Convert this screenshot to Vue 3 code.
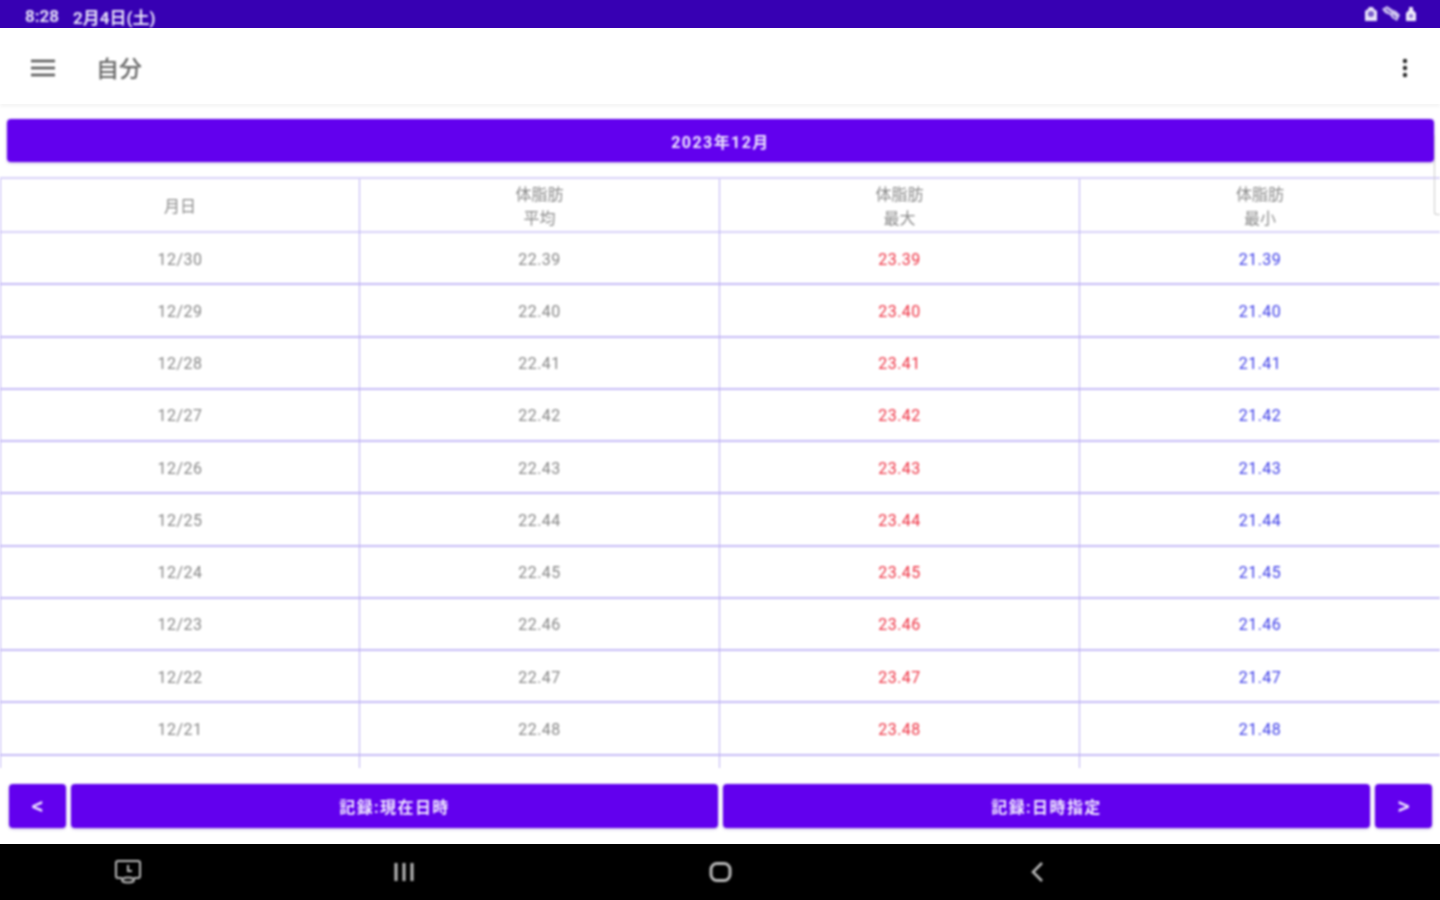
<template>
  <div class="screen">
    <div class="status-bar">
      <span class="status-time">8:28</span>
      <span class="status-date">2月4日(土)</span>
      <div class="status-icons">
        <svg width="14" height="16" viewBox="0 0 14 16"><path d="M5 1h4l1 2 3 2v10H1V5l3-2z" fill="#e9e4fa" /><circle cx="7" cy="8" r="3" fill="#7a5ccc" /></svg>
        <svg width="18" height="16" viewBox="0 0 18 16"><path d="M0 3l5-3 6 4 3 1 4 4-3 6-5-3-2-3-5-2z" fill="#cfc4f0" /><path d="M4 3l5 4M11 9l3 3" stroke="#5a35b8" stroke-width="1.2" /></svg>
        <svg width="14" height="16" viewBox="0 0 14 16"><path d="M5 1h4v3l3 3v8H2V7l3-3z" fill="#efeafb" /><circle cx="7" cy="10" r="2" fill="#8d74d4" /></svg>
      </div>
    </div>

    <header class="app-bar">
      <svg class="menu-icon" width="24" height="18" viewBox="0 0 24 18">
        <path d="M0 2h24M0 9h24M0 16h24" stroke="#555" stroke-width="2.4" fill="none" />
      </svg>
      <h1 class="app-title">自分</h1>
      <svg class="more-icon" width="6" height="20" viewBox="0 0 6 20">
        <circle cx="3" cy="3" r="2.2" fill="#222" />
        <circle cx="3" cy="10" r="2.2" fill="#222" />
        <circle cx="3" cy="17" r="2.2" fill="#222" />
      </svg>
    </header>

    <main class="content">
      <button class="btn month-btn">2023年12月</button>
      <div class="table-wrap">
        <div class="row head">
          <div class="cell">月日</div>
          <div class="cell">体脂肪<br />平均</div>
          <div class="cell">体脂肪<br />最大</div>
          <div class="cell">体脂肪<br />最小</div>
        </div>
        <div v-for="r in rows" :key="r.date" class="row">
          <div class="cell">{{ r.date }}</div>
          <div class="cell">{{ r.avg }}</div>
          <div class="cell max">{{ r.max }}</div>
          <div class="cell min">{{ r.min }}</div>
        </div>
        <div class="row">
          <div class="cell"></div>
          <div class="cell"></div>
          <div class="cell"></div>
          <div class="cell"></div>
        </div>
      </div>
      <div class="scroll-mark"></div>
    </main>

    <div class="actions">
      <button class="btn arrow">&lt;</button>
      <button class="btn wide">記録:現在日時</button>
      <button class="btn wide">記録:日時指定</button>
      <button class="btn arrow">&gt;</button>
    </div>

    <nav class="nav-bar">
      <div class="nav-slot">
        <svg width="28" height="26" viewBox="0 0 28 26" fill="none" stroke="#bbb" stroke-width="2">
          <path d="M8 19H4a2 2 0 0 1-2-2V4a2 2 0 0 1 2-2h20a2 2 0 0 1 2 2v13a2 2 0 0 1-2 2h-4" />
          <path d="M14 6v6h4" />
          <ellipse cx="14" cy="21" rx="6" ry="2.5" />
        </svg>
      </div>
      <div class="nav-slot">
        <svg width="22" height="20" viewBox="0 0 22 20" fill="none" stroke="#bbb" stroke-width="3">
          <path d="M3 1v18M11 1v18M19 1v18" />
        </svg>
      </div>
      <div class="nav-slot">
        <svg width="24" height="22" viewBox="0 0 24 22" fill="none" stroke="#bbb" stroke-width="3">
          <rect x="3" y="2.5" width="19" height="17" rx="6" />
        </svg>
      </div>
      <div class="nav-slot">
        <svg width="14" height="22" viewBox="0 0 14 22" fill="none" stroke="#bbb" stroke-width="2.5">
          <path d="M12 2L3 11l9 9" />
        </svg>
      </div>
    </nav>
  </div>
</template>

<script setup>
const rows = []
for (let i = 0; i < 10; i++) {
  rows.push({
    date: '12/' + (30 - i),
    avg: (22.39 + i * 0.01).toFixed(2),
    max: (23.39 + i * 0.01).toFixed(2),
    min: (21.39 + i * 0.01).toFixed(2),
  })
}
</script>

<style>
html, body {
  margin: 0;
  background: #fff;
  overflow: hidden;
}
</style>

<style scoped>
.screen {
  width: 1440px;
  height: 900px;
  display: flex;
  flex-direction: column;
  font-family: Roboto, "Noto Sans CJK JP", sans-serif;
  overflow: hidden;
}
.status-bar > *,
.app-bar > *,
.content,
.actions,
.nav-slot {
  filter: blur(0.8px);
}
.status-bar {
  height: 28px;
  flex: none;
  background: #3700b3;
  color: #e6e0f8;
  display: flex;
  align-items: center;
  padding: 4px 22px 0 25px;
  box-sizing: border-box;
  font-size: 17px;
  font-weight: 700;
}
.status-date {
  margin-left: 14px;
}
.status-icons {
  margin-left: auto;
  display: flex;
  gap: 4px;
  align-items: center;
  margin-top: -4px;
}
.app-bar {
  height: 76px;
  flex: none;
  display: flex;
  align-items: center;
  padding: 4px 32px 0 31px;
  box-sizing: border-box;
  background: #fff;
  box-shadow: 0 3px 3px rgba(0, 0, 0, 0.04);
  position: relative;
  z-index: 1;
}
.app-title {
  margin: -2px 0 0 41px;
  font-size: 23px;
  font-weight: 500;
  color: #666;
}
.more-icon {
  margin-left: auto;
}
.content {
  flex: none;
  height: 680px;
  box-sizing: border-box;
  padding-top: 15px;
  position: relative;
}
.btn {
  border: none;
  background: #6200ee;
  color: #f0eafe;
  border-radius: 4px;
  font-family: inherit;
  font-size: 16px;
  font-weight: 700;
  letter-spacing: 1.43px;
  padding: 0;
  box-shadow: 0 1px 3px rgba(60, 0, 160, 0.35);
}
.month-btn {
  display: block;
  width: 1427px;
  height: 43px;
  margin-left: 7px;
}
.table-wrap {
  margin-top: 15px;
  height: 591px;
  overflow: hidden;
  border-top: 2px solid #d8d1f9;
  box-sizing: border-box;
}
.row {
  display: grid;
  grid-template-columns: 359px 360px 360px 361px;
  height: 52.25px;
  box-sizing: border-box;
  border-bottom: 2px solid #c6bbf7;
  color: #888;
  font-size: 16px;
  letter-spacing: 0.5px;
}
.row.head {
  height: 54px;
  border-bottom-color: #d8d1f9;
  line-height: 24px;
  letter-spacing: 0;
  color: #8a8a8a;
}
.cell {
  display: flex;
  align-items: center;
  justify-content: center;
  text-align: center;
  border-left: 1.5px solid #bdb0f5;
  margin-bottom: -2px;
}
.head .cell {
  padding-top: 2px;
  box-sizing: border-box;
}
.cell.max {
  color: #ee3344;
}
.cell.min {
  color: #4040e8;
}
.scroll-mark {
  position: absolute;
  right: 0;
  top: 31px;
  width: 6px;
  height: 80px;
  border-left: 1px solid #ccc;
  border-bottom: 1px solid #ccc;
  border-bottom-left-radius: 3px;
  box-sizing: border-box;
}
.actions {
  height: 60px;
  flex: none;
  box-sizing: border-box;
  display: flex;
  gap: 5px;
  padding: 0 8px 16px 9px;
}
.arrow {
  width: 57px;
  flex: none;
  font-size: 24px;
  letter-spacing: 0;
  font-weight: 500;
}
.wide {
  flex: 1;
}
.nav-bar {
  height: 56px;
  flex: none;
  background: #000;
  display: grid;
  grid-template-columns: 256px 296px 336px 298px;
  align-items: center;
}
.nav-slot {
  display: flex;
  justify-content: center;
}
</style>
